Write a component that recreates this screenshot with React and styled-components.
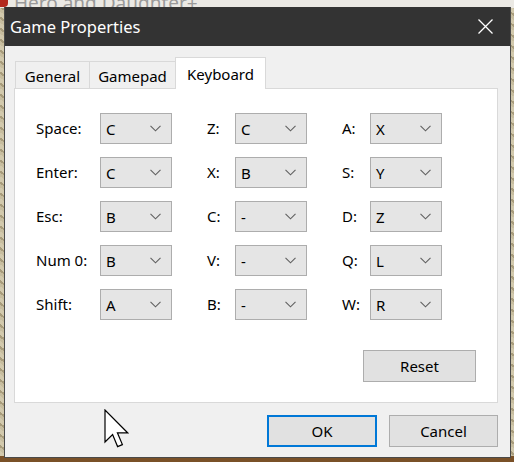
import styled, { createGlobalStyle } from 'styled-components';

const GlobalStyle = createGlobalStyle`
    html, body {
        margin: 0;
        padding: 0;
        background: #bdb497;
    }
    * {
        box-sizing: border-box;
    }
`

const Desktop = styled.div`
    position: relative;
    width: 514px;
    height: 462px;
    padding: 7px 3px 4px 4px;
    overflow: hidden;
    background:
        linear-gradient(to bottom, #ebe9e4 0, #ebe9e4 8px, transparent 8px),
        linear-gradient(to bottom, transparent 456px, #7a5128 456px),
        repeating-linear-gradient(35deg, #c7bd9f 0 3px, #a89c7c 3px 5px, #d2c9ad 5px 9px);
    font-family: "Noto Sans", "Open Sans", sans-serif;
`

const BehindTitle = styled.div`
    position: absolute;
    left: 14px;
    top: -8px;
    font-size: 19px;
    line-height: 22px;
    color: #9a9a9a;
`

const RedBlob = styled.div`
    position: absolute;
    left: 0;
    top: 0;
    width: 8px;
    height: 7px;
    background: #b3281d;
    border-radius: 0 0 4px 0;
`

const Dialog = styled.div`
    position: relative;
    display: flex;
    flex-direction: column;
    width: 507px;
    height: 451px;
    background: #f0f0f0;
    border: 1px solid #4a4a4a;
    border-top: none;
`

const TitleBar = styled.div`
    display: flex;
    align-items: center;
    justify-content: space-between;
    height: 39px;
    background: #333333;
    color: #ffffff;
    padding: 0 0 0 5px;
    font-size: 16.5px;
`

const CloseBox = styled.div`
    display: flex;
    align-items: center;
    justify-content: center;
    width: 46px;
    height: 39px;
    margin-right: 2px;
`

const Body = styled.div`
    flex: 1;
    display: flex;
    flex-direction: column;
    padding: 11px 12px 10px 9px;
`

const TabStrip = styled.div`
    display: flex;
    align-items: flex-end;
    height: 31px;
    padding-left: 1px;
`

const Tab = styled.div`
    width: ${p => p.$w}px;
    height: ${p => (p.$active ? 32 : 27)}px;
    display: flex;
    align-items: center;
    justify-content: center;
    font-size: 15px;
    color: #000;
    background: ${p => (p.$active ? '#ffffff' : '#f0f0f0')};
    border: 1px solid #d9d9d9;
    border-bottom: none;
    margin-right: -1px;
    padding-top: ${p => (p.$active ? 0 : 2)}px;
    position: relative;
    z-index: ${p => (p.$active ? 2 : 1)};
    margin-bottom: ${p => (p.$active ? -1 : 0)}px;
`

const Panel = styled.div`
    height: 315px;
    background: #ffffff;
    border: 1px solid #d9d9d9;
    display: flex;
    flex-direction: column;
    padding: 24px 21px 20px 21px;
`

const KeyGrid = styled.div`
    display: grid;
    grid-template-columns: 64px 72px 35px 28px 72px 35px 28px 72px;
    grid-auto-rows: 31px;
    row-gap: 13px;
    align-items: center;
`

const KeyLabel = styled.div`
    font-size: 15px;
    color: #000;
    padding-bottom: 1px;
`

const Combo = styled.div`
    height: 31px;
    display: flex;
    align-items: center;
    justify-content: space-between;
    background: #e5e5e5;
    border: 1px solid #adadad;
    padding: 0 10px 0 5px;
    font-size: 15px;
    color: #000;
`

const PanelFooter = styled.div`
    margin-top: auto;
    display: flex;
    justify-content: flex-end;
`

const Button = styled.div`
    width: ${p => p.$w}px;
    height: 32px;
    display: flex;
    align-items: center;
    justify-content: center;
    background: #e1e1e1;
    border: ${p => (p.$primary ? '2px solid #0078d7' : '1px solid #adadad')};
    font-size: 15px;
    color: #000;
`

const DialogFooter = styled.div`
    margin-top: auto;
    display: flex;
    justify-content: flex-end;
    gap: 12px;
`

const Cursor = styled.svg`
    position: absolute;
    left: 104px;
    top: 409px;
`

function Chevron() {
    return (
        <svg width="11" height="7" viewBox="0 0 11 7">
            <path d="M0.5 0.8 L5.5 5.8 L10.5 0.8" fill="none" stroke="#606060" strokeWidth="1.1" />
        </svg>
    );
}

const rows = [
    ['Space:', 'C', 'Z:', 'C', 'A:', 'X'],
    ['Enter:', 'C', 'X:', 'B', 'S:', 'Y'],
    ['Esc:', 'B', 'C:', '-', 'D:', 'Z'],
    ['Num 0:', 'B', 'V:', '-', 'Q:', 'L'],
    ['Shift:', 'A', 'B:', '-', 'W:', 'R'],
];

function App() {
    return (
        <Desktop>
            <GlobalStyle />
            <BehindTitle>Hero and Daughter+</BehindTitle>
            <RedBlob />
            <Dialog>
                <TitleBar>
                    <span>Game Properties</span>
                    <CloseBox>
                        <svg width="15" height="15" viewBox="0 0 15 15">
                            <path d="M0.5 0.5 L14.5 14.5 M14.5 0.5 L0.5 14.5" stroke="#fff" strokeWidth="1.3" />
                        </svg>
                    </CloseBox>
                </TitleBar>
                <Body>
                    <TabStrip>
                        <Tab $w={75}>General</Tab>
                        <Tab $w={87}>Gamepad</Tab>
                        <Tab $w={91} $active>Keyboard</Tab>
                    </TabStrip>
                    <Panel>
                        <KeyGrid>
                            {rows.map(r => (
                                <>
                                    <KeyLabel key={r[0] + 'l1'}>{r[0]}</KeyLabel>
                                    <Combo key={r[0] + 'c1'}>{r[1]}<Chevron /></Combo>
                                    <span key={r[0] + 's1'} />
                                    <KeyLabel key={r[0] + 'l2'}>{r[2]}</KeyLabel>
                                    <Combo key={r[0] + 'c2'}>{r[3]}<Chevron /></Combo>
                                    <span key={r[0] + 's2'} />
                                    <KeyLabel key={r[0] + 'l3'}>{r[4]}</KeyLabel>
                                    <Combo key={r[0] + 'c3'}>{r[5]}<Chevron /></Combo>
                                </>
                            ))}
                        </KeyGrid>
                        <PanelFooter>
                            <Button $w={113}>Reset</Button>
                        </PanelFooter>
                    </Panel>
                    <DialogFooter>
                        <Button $w={110} $primary>OK</Button>
                        <Button $w={109}>Cancel</Button>
                    </DialogFooter>
                </Body>
            </Dialog>
            <Cursor width="25" height="40" viewBox="0 0 12.5 20">
                <path d="M0.5 0.5 L0.5 16.5 L4.3 12.8 L6.8 18.8 L9.2 17.8 L6.7 11.9 L11.8 11.9 Z" fill="#fff" stroke="#000" strokeWidth="0.6" strokeLinejoin="miter" />
            </Cursor>
        </Desktop>
    );
}

export default App;
